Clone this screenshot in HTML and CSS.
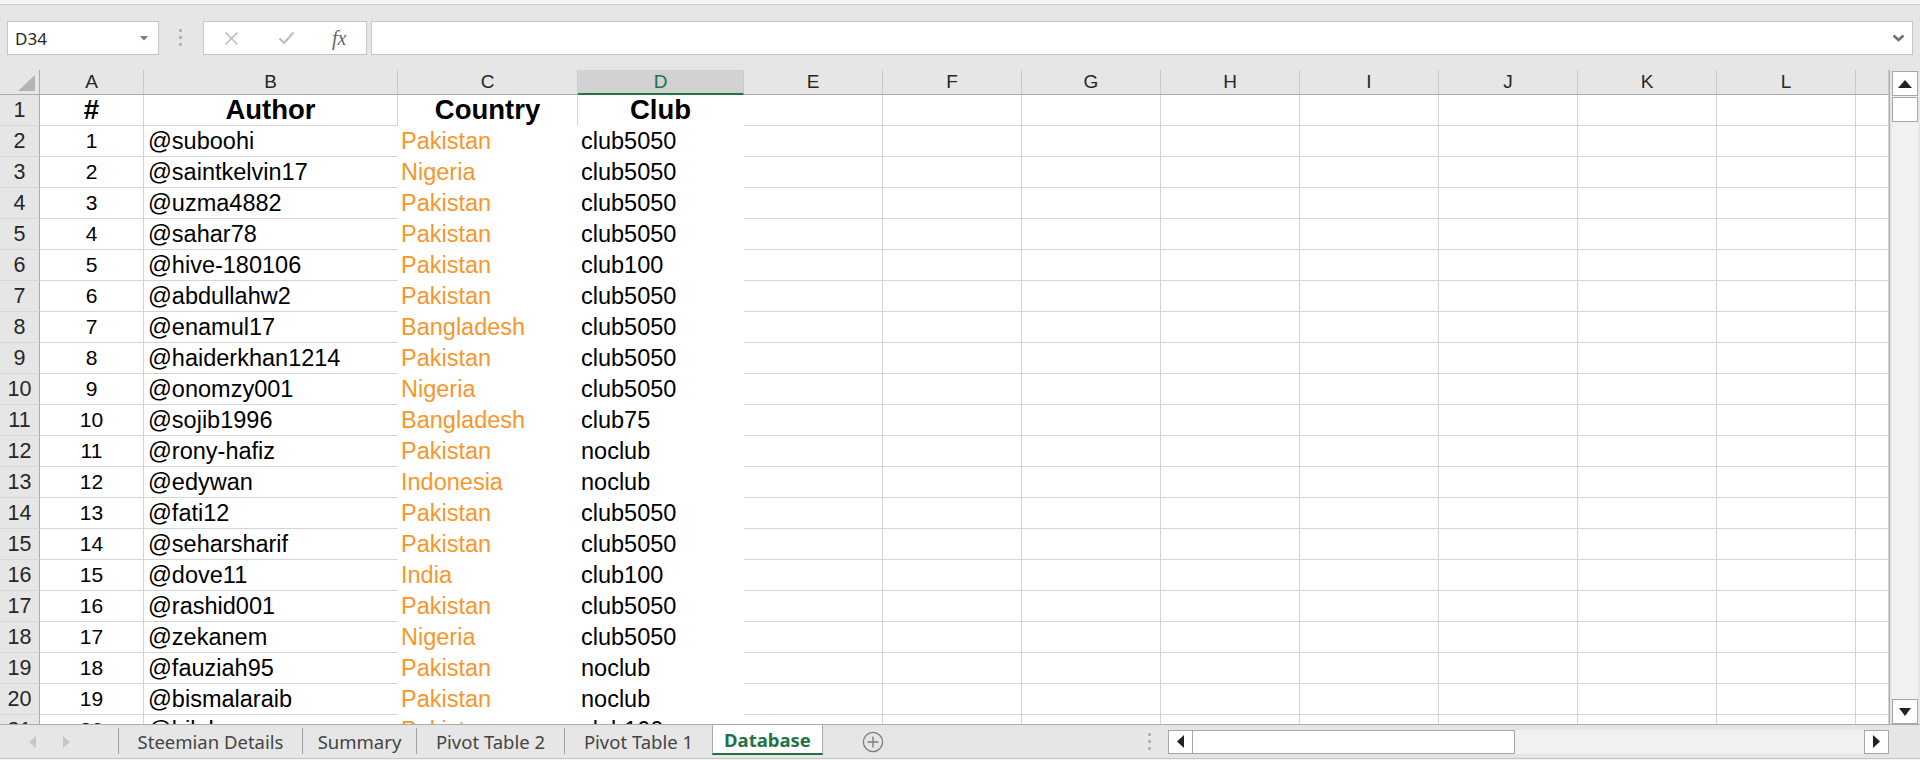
FILE: index.html
```html
<!DOCTYPE html>
<html lang="en">
<head>
    <meta charset="UTF-8">
    <title>Database</title>
    <link rel="stylesheet" href="styles.css">
</head>
<body>
    <div class="topstrip"></div>

    <!-- name box + formula bar -->
    <div class="fbar">
        <div class="namebox">
            <span>D34</span>
            <svg class="caret" width="8" height="5" viewBox="0 0 8 5"><polygon points="0,0 8,0 4,4.5" fill="#7a7a7a"/></svg>
        </div>
        <div class="grip"><i></i><i></i><i></i></div>
        <div class="fxbox">
            <svg class="ico-x" width="15" height="15" viewBox="0 0 15 15"><path d="M1.5 1.5 L13.5 13.5 M13.5 1.5 L1.5 13.5" stroke="#bdbdbd" stroke-width="1.6" fill="none"/></svg>
            <svg class="ico-ok" width="17" height="14" viewBox="0 0 17 14"><path d="M1.5 7.5 L6 12 L15.5 1.5" stroke="#bdbdbd" stroke-width="2" fill="none"/></svg>
            <span class="fx">fx</span>
        </div>
        <div class="formula">
            <svg width="13" height="8" viewBox="0 0 13 8"><path d="M1.5 1.5 L6.5 6 L11.5 1.5" stroke="#6f6f6f" stroke-width="2.6" fill="none"/></svg>
        </div>
    </div>

    <div class="sheet">
        <div class="grid">
            <div class="corner"><svg width="18" height="17" viewBox="0 0 18 17"><polygon points="17,0 17,16 0,16" fill="#b4b4b4"/></svg></div>
            <div class="ch">A</div><div class="ch">B</div><div class="ch">C</div><div class="ch sel">D</div><div class="ch">E</div><div class="ch">F</div><div class="ch">G</div><div class="ch">H</div><div class="ch">I</div><div class="ch">J</div><div class="ch">K</div><div class="ch">L</div><div class="ch"></div>

            <div class="rh">1</div><div class="cell hd">#</div><div class="cell hd">Author</div><div class="cell hd hc">Country</div><div class="cell hd hl">Club</div><div class="cell"></div><div class="cell"></div><div class="cell"></div><div class="cell"></div><div class="cell"></div><div class="cell"></div><div class="cell"></div><div class="cell"></div><div class="cell"></div>
            <div class="rh">2</div><div class="cell num">1</div><div class="cell auth">@suboohi</div><div class="cell ctry">Pakistan</div><div class="cell club">club5050</div><div class="cell"></div><div class="cell"></div><div class="cell"></div><div class="cell"></div><div class="cell"></div><div class="cell"></div><div class="cell"></div><div class="cell"></div><div class="cell"></div>
            <div class="rh">3</div><div class="cell num">2</div><div class="cell auth">@saintkelvin17</div><div class="cell ctry">Nigeria</div><div class="cell club">club5050</div><div class="cell"></div><div class="cell"></div><div class="cell"></div><div class="cell"></div><div class="cell"></div><div class="cell"></div><div class="cell"></div><div class="cell"></div><div class="cell"></div>
            <div class="rh">4</div><div class="cell num">3</div><div class="cell auth">@uzma4882</div><div class="cell ctry">Pakistan</div><div class="cell club">club5050</div><div class="cell"></div><div class="cell"></div><div class="cell"></div><div class="cell"></div><div class="cell"></div><div class="cell"></div><div class="cell"></div><div class="cell"></div><div class="cell"></div>
            <div class="rh">5</div><div class="cell num">4</div><div class="cell auth">@sahar78</div><div class="cell ctry">Pakistan</div><div class="cell club">club5050</div><div class="cell"></div><div class="cell"></div><div class="cell"></div><div class="cell"></div><div class="cell"></div><div class="cell"></div><div class="cell"></div><div class="cell"></div><div class="cell"></div>
            <div class="rh">6</div><div class="cell num">5</div><div class="cell auth">@hive-180106</div><div class="cell ctry">Pakistan</div><div class="cell club">club100</div><div class="cell"></div><div class="cell"></div><div class="cell"></div><div class="cell"></div><div class="cell"></div><div class="cell"></div><div class="cell"></div><div class="cell"></div><div class="cell"></div>
            <div class="rh">7</div><div class="cell num">6</div><div class="cell auth">@abdullahw2</div><div class="cell ctry">Pakistan</div><div class="cell club">club5050</div><div class="cell"></div><div class="cell"></div><div class="cell"></div><div class="cell"></div><div class="cell"></div><div class="cell"></div><div class="cell"></div><div class="cell"></div><div class="cell"></div>
            <div class="rh">8</div><div class="cell num">7</div><div class="cell auth">@enamul17</div><div class="cell ctry">Bangladesh</div><div class="cell club">club5050</div><div class="cell"></div><div class="cell"></div><div class="cell"></div><div class="cell"></div><div class="cell"></div><div class="cell"></div><div class="cell"></div><div class="cell"></div><div class="cell"></div>
            <div class="rh">9</div><div class="cell num">8</div><div class="cell auth">@haiderkhan1214</div><div class="cell ctry">Pakistan</div><div class="cell club">club5050</div><div class="cell"></div><div class="cell"></div><div class="cell"></div><div class="cell"></div><div class="cell"></div><div class="cell"></div><div class="cell"></div><div class="cell"></div><div class="cell"></div>
            <div class="rh">10</div><div class="cell num">9</div><div class="cell auth">@onomzy001</div><div class="cell ctry">Nigeria</div><div class="cell club">club5050</div><div class="cell"></div><div class="cell"></div><div class="cell"></div><div class="cell"></div><div class="cell"></div><div class="cell"></div><div class="cell"></div><div class="cell"></div><div class="cell"></div>
            <div class="rh">11</div><div class="cell num">10</div><div class="cell auth">@sojib1996</div><div class="cell ctry">Bangladesh</div><div class="cell club">club75</div><div class="cell"></div><div class="cell"></div><div class="cell"></div><div class="cell"></div><div class="cell"></div><div class="cell"></div><div class="cell"></div><div class="cell"></div><div class="cell"></div>
            <div class="rh">12</div><div class="cell num">11</div><div class="cell auth">@rony-hafiz</div><div class="cell ctry">Pakistan</div><div class="cell club">noclub</div><div class="cell"></div><div class="cell"></div><div class="cell"></div><div class="cell"></div><div class="cell"></div><div class="cell"></div><div class="cell"></div><div class="cell"></div><div class="cell"></div>
            <div class="rh">13</div><div class="cell num">12</div><div class="cell auth">@edywan</div><div class="cell ctry">Indonesia</div><div class="cell club">noclub</div><div class="cell"></div><div class="cell"></div><div class="cell"></div><div class="cell"></div><div class="cell"></div><div class="cell"></div><div class="cell"></div><div class="cell"></div><div class="cell"></div>
            <div class="rh">14</div><div class="cell num">13</div><div class="cell auth">@fati12</div><div class="cell ctry">Pakistan</div><div class="cell club">club5050</div><div class="cell"></div><div class="cell"></div><div class="cell"></div><div class="cell"></div><div class="cell"></div><div class="cell"></div><div class="cell"></div><div class="cell"></div><div class="cell"></div>
            <div class="rh">15</div><div class="cell num">14</div><div class="cell auth">@seharsharif</div><div class="cell ctry">Pakistan</div><div class="cell club">club5050</div><div class="cell"></div><div class="cell"></div><div class="cell"></div><div class="cell"></div><div class="cell"></div><div class="cell"></div><div class="cell"></div><div class="cell"></div><div class="cell"></div>
            <div class="rh">16</div><div class="cell num">15</div><div class="cell auth">@dove11</div><div class="cell ctry">India</div><div class="cell club">club100</div><div class="cell"></div><div class="cell"></div><div class="cell"></div><div class="cell"></div><div class="cell"></div><div class="cell"></div><div class="cell"></div><div class="cell"></div><div class="cell"></div>
            <div class="rh">17</div><div class="cell num">16</div><div class="cell auth">@rashid001</div><div class="cell ctry">Pakistan</div><div class="cell club">club5050</div><div class="cell"></div><div class="cell"></div><div class="cell"></div><div class="cell"></div><div class="cell"></div><div class="cell"></div><div class="cell"></div><div class="cell"></div><div class="cell"></div>
            <div class="rh">18</div><div class="cell num">17</div><div class="cell auth">@zekanem</div><div class="cell ctry">Nigeria</div><div class="cell club">club5050</div><div class="cell"></div><div class="cell"></div><div class="cell"></div><div class="cell"></div><div class="cell"></div><div class="cell"></div><div class="cell"></div><div class="cell"></div><div class="cell"></div>
            <div class="rh">19</div><div class="cell num">18</div><div class="cell auth">@fauziah95</div><div class="cell ctry">Pakistan</div><div class="cell club">noclub</div><div class="cell"></div><div class="cell"></div><div class="cell"></div><div class="cell"></div><div class="cell"></div><div class="cell"></div><div class="cell"></div><div class="cell"></div><div class="cell"></div>
            <div class="rh">20</div><div class="cell num">19</div><div class="cell auth">@bismalaraib</div><div class="cell ctry">Pakistan</div><div class="cell club">noclub</div><div class="cell"></div><div class="cell"></div><div class="cell"></div><div class="cell"></div><div class="cell"></div><div class="cell"></div><div class="cell"></div><div class="cell"></div><div class="cell"></div>
            <div class="rh">21</div><div class="cell num">20</div><div class="cell auth">@bilal</div><div class="cell ctry">Pakistan</div><div class="cell club">club100</div><div class="cell"></div><div class="cell"></div><div class="cell"></div><div class="cell"></div><div class="cell"></div><div class="cell"></div><div class="cell"></div><div class="cell"></div><div class="cell"></div>
        </div>
        <div class="vscroll">
            <div class="sbtn"><svg width="14" height="8" viewBox="0 0 14 8"><polygon points="0,8 14,8 7,0" fill="#222"/></svg></div>
            <div class="vtrack">
                <div class="vthumb"></div>
            </div>
            <div class="sbtn"><svg width="12" height="8" viewBox="0 0 12 8"><polygon points="0,0 12,0 6,8" fill="#222"/></svg></div>
        </div>
    </div>

    <!-- sheet tabs -->
    <div class="tabbar">
        <div class="nav">
            <svg width="7" height="12" viewBox="0 0 7 12"><polygon points="7,0 7,12 0,6" fill="#c6c6c6"/></svg>
            <svg width="7" height="12" viewBox="0 0 7 12"><polygon points="0,0 0,12 7,6" fill="#c6c6c6"/></svg>
        </div>
        <div class="tab t-details">Steemian Details</div>
        <div class="tab t-summary">Summary</div>
        <div class="tab t-pivot">Pivot Table 2</div>
        <div class="tab t-pivot">Pivot Table 1</div>
        <div class="tab active">Database</div>
        <div class="addsheet">
            <svg width="22" height="22" viewBox="0 0 22 22"><circle cx="11" cy="11" r="9.6" stroke="#7d7d7d" stroke-width="1.3" fill="none"/><path d="M11 5.5 V16.5 M5.5 11 H16.5" stroke="#7d7d7d" stroke-width="1.4"/></svg>
        </div>
        <div class="hgroup">
            <div class="grip"><i></i><i></i><i></i></div>
            <div class="hscroll">
                <div class="sbtn"><svg width="7" height="13" viewBox="0 0 7 13"><polygon points="7,0 7,13 0,6.5" fill="#222"/></svg></div>
                <div class="hthumb"></div>
                <div class="htrack"></div>
                <div class="sbtn"><svg width="7" height="13" viewBox="0 0 7 13"><polygon points="0,0 0,13 7,6.5" fill="#222"/></svg></div>
            </div>
        </div>
    </div>
</body>
</html>
```

FILE: styles.css
```css
body {
    margin: 0;
    width: 1920px;
    height: 760px;
    overflow: hidden;
    background-color: #f3f3f3;
    font-family: "Liberation Sans", Arial, sans-serif;
    color: #000;
}

.topstrip {
    height: 4px;
    background-color: #f5f5f5;
    border-bottom: 1px solid #d2d2d2;
}

/* formula bar */
.fbar {
    height: 65px;
    box-sizing: border-box;
    padding-top: 16px;
    background-color: #e6e6e6;
    display: flex;
    align-items: flex-start;
}

.namebox {
    margin-left: 7px;
    width: 152px;
    height: 34px;
    box-sizing: border-box;
    border: 1px solid #c6c6c6;
    background-color: #fff;
    display: flex;
    align-items: center;
    justify-content: space-between;
    padding: 0 10px 0 7px;
    font-family: "Noto Sans", sans-serif;
    font-size: 17px;
    color: #262626;
}

.grip {
    display: flex;
    flex-direction: column;
    gap: 4px;
}

.grip i {
    display: block;
    width: 3px;
    height: 3px;
    background-color: #b4b4b4;
}

.fbar .grip {
    margin: 8px 0 0 20px;
}

.fxbox {
    margin-left: 21px;
    width: 164px;
    height: 34px;
    box-sizing: border-box;
    border: 1px solid #c6c6c6;
    background-color: #fff;
    display: flex;
    align-items: center;
    padding-left: 20px;
}

.ico-ok {
    margin-left: 39px;
}

.fx {
    margin-left: 37px;
    font-family: "Liberation Serif", serif;
    font-style: italic;
    font-size: 20px;
    color: #666;
}

.formula {
    margin-left: 4px;
    width: 1542px;
    height: 34px;
    box-sizing: border-box;
    border: 1px solid #c6c6c6;
    background-color: #fff;
    display: flex;
    align-items: center;
    justify-content: flex-end;
    padding-right: 7px;
}

/* grid */
.sheet {
    display: flex;
    height: 654px;
    background-color: #e6e6e6;
}

.grid {
    width: 1890px;
    height: 654px;
    box-sizing: border-box;
    border-right: 1px solid #ababab;
    overflow: hidden;
    background-color: #fff;
    display: grid;
    grid-template-columns: 40px 104px 254px 180px 166px repeat(8, 139px) 1fr;
    grid-template-rows: 25px repeat(21, 31px);
}

.corner {
    background-color: #e6e6e6;
    border-right: 1px solid #ababab;
    border-bottom: 1px solid #ababab;
    display: flex;
    align-items: flex-end;
    justify-content: flex-end;
    padding: 0 3px 2px 0;
}

.ch {
    background-color: #e6e6e6;
    border-right: 1px solid #cacaca;
    border-bottom: 1px solid #ababab;
    display: flex;
    align-items: flex-end;
    justify-content: center;
    padding-bottom: 1px;
    font-size: 19px;
    color: #262626;
}

.ch.sel {
    background-color: #d2d2d2;
    color: #217346;
    border-bottom: 2px solid #217346;
    padding-bottom: 0;
}

.rh {
    background-color: #e6e6e6;
    border-right: 1px solid #ababab;
    border-bottom: 1px solid #d6d6d6;
    display: flex;
    align-items: flex-end;
    justify-content: center;
    padding-bottom: 2px;
    font-size: 21.5px;
    color: #262626;
}

.cell {
    border-right: 1px solid #d4d4d4;
    border-bottom: 1px solid #d4d4d4;
    display: flex;
    align-items: flex-end;
    padding: 0 4px 1px;
    font-size: 23.5px;
    line-height: 27px;
    white-space: nowrap;
    overflow: hidden;
}

.num {
    justify-content: center;
    font-size: 21px;
    padding-bottom: 2px;
}

.hd {
    justify-content: center;
    font-weight: bold;
    font-size: 27.5px;
    line-height: 29px;
    padding-bottom: 1px;
}

.hd.hc {
    border-bottom-color: #fff;
}

.hd.hl {
    border-color: #fff;
}

.auth {
    border-right-color: #fff;
}

.ctry {
    color: #f7962b;
    border-color: #fff;
    padding-left: 3px;
}

.club {
    border-color: #fff;
    padding-left: 3px;
}

/* scrollbars */
.vscroll {
    width: 30px;
    display: flex;
    flex-direction: column;
    padding: 1px 0 0 2px;
    box-sizing: border-box;
}

.sbtn {
    width: 26px;
    height: 25px;
    box-sizing: border-box;
    border: 1px solid #a6a6a6;
    background-color: #fff;
    display: flex;
    align-items: center;
    justify-content: center;
}

.vtrack {
    flex: 1;
    width: 26px;
    background-color: #f1f1f1;
    padding-top: 1px;
}

.vthumb {
    width: 26px;
    height: 25px;
    box-sizing: border-box;
    border: 1px solid #a6a6a6;
    background-color: #fff;
}

/* sheet tabs */
.tabbar {
    height: 35px;
    box-sizing: border-box;
    border-top: 1px solid #ababab;
    border-bottom: 1px solid #c6c6c6;
    background-color: #e6e6e6;
    display: flex;
    font-family: "Noto Sans", sans-serif;
    font-size: 18.5px;
    color: #444;
}

.nav {
    width: 118px;
    display: flex;
    align-items: center;
    padding-left: 29px;
    gap: 27px;
    box-sizing: border-box;
}

.tab {
    display: flex;
    align-items: center;
    justify-content: center;
    box-sizing: border-box;
    margin: 3px 0 4px;
    border-left: 1px solid #a0a0a0;
    white-space: nowrap;
}

.t-details { width: 184px; }
.t-summary { width: 114px; }
.t-pivot { width: 148px; }

.tab.active {
    width: 111px;
    margin: 0 0 3px;
    background-color: #fff;
    border-left: 1px solid #ababab;
    border-right: 1px solid #ababab;
    border-bottom: 2px solid #217346;
    color: #217346;
    font-weight: bold;
}

.addsheet {
    display: flex;
    align-items: center;
    margin-left: 39px;
}

.hgroup {
    margin-left: auto;
    margin-right: 31px;
    display: flex;
    align-items: center;
}

.hgroup .grip {
    margin-right: 17px;
}

.hscroll {
    width: 721px;
    height: 24px;
    display: flex;
}

.hscroll .sbtn {
    width: 25px;
    height: 24px;
}

.hthumb {
    width: 322px;
    box-sizing: border-box;
    border: 1px solid #a6a6a6;
    border-left: none;
    background-color: #fff;
}

.htrack {
    flex: 1;
    background-color: #f1f1f1;
}
```
